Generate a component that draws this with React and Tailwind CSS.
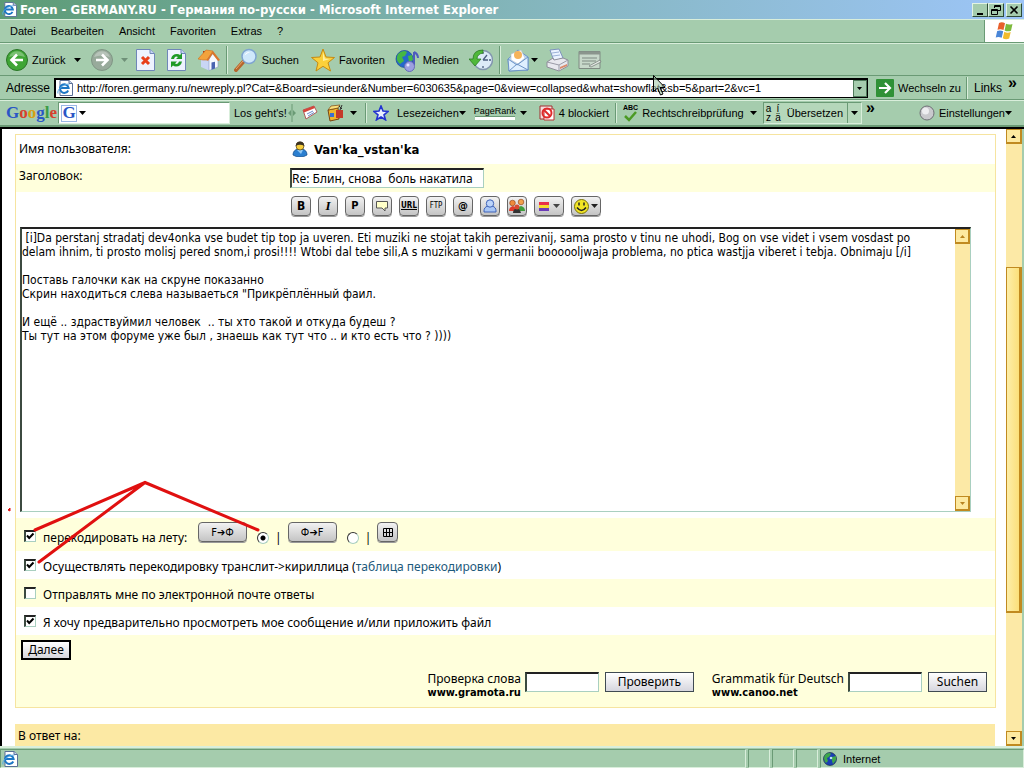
import { useState } from "react";

const draft = ` [i]Da perstanj stradatj dev4onka vse budet tip top ja uveren. Eti muziki ne stojat takih perezivanij, sama prosto v tinu ne uhodi, Bog on vse videt i vsem vosdast po
delam ihnim, ti prosto molisj pered snom,i prosi!!!! Wtobi dal tebe sili,A s muzikami v germanii boooooljwaja problema, no ptica wastjja viberet i tebja. Obnimaju [/i]

Поставь галочки как на скруне показанно
Скрин находиться слева называеться "Прикрёплённый фаил.

И ещё .. здраствуймил человек  .. ты хто такой и откуда будеш ?
Ты тут на этом форуме уже был , знаешь как тут что .. и кто есть что ? ))))`;

const ui = "font-['Liberation_Sans',sans-serif] text-[11px] leading-[14px]";
const narrow = "font-['DejaVu_Sans_Condensed','DejaVu_Sans',sans-serif]";
const body = "font-['Noto_Sans','DejaVu_Sans',sans-serif]";
const fieldCls = "border border-t-2 border-l-2 border-t-[#222] border-l-[#3c4a40] border-r-[#a9cfc0] border-b-[#a9cfc0] bg-white outline-none";
const keyCls = "flex h-5 items-center justify-center rounded-[4px] border border-[#666] bg-linear-to-b from-[#f2f2f2] to-[#c4c4c4] shadow-[0_1px_0_#999]";
const pushCls = "h-5 border border-[#3f4a52] bg-linear-to-b from-white to-[#d6d6de] text-[12px] leading-[14px]";

/* ---------- icons ---------- */

function IePage({ className = "size-4" }) {
  return (
    <svg viewBox="0 0 16 16" className={`${className} shrink-0`}>
      <path d="M3 .5h9l3.500 3v12H3z" fill="#fff" stroke="#5a6f96" />
      <path d="M12 .5v3h3.500" fill="#c9d6ee" stroke="#5a6f96" />
      <path d="M11.200 10.500A4.300 4.300 0 1 1 11.600 8H3.500" fill="none" stroke="#1b76c4" strokeWidth="2" />
      <path d="M1 13.500C-.5 10 6 4 12.500 4" fill="none" stroke="#55a8e6" />
    </svg>
  );
}

function Caret({ className = "text-black" }) {
  return (
    <svg viewBox="0 0 7 4" className={`h-1 w-[7px] shrink-0 ${className}`}>
      <path d="M0 0h7L3.500 4z" fill="currentColor" />
    </svg>
  );
}

function ArrowBall({ color, dark, flip }) {
  return (
    <svg viewBox="0 0 22 22" className="size-[22px] shrink-0">
      <circle cx="11" cy="11" r="10.500" fill={color} stroke={dark} />
      <path d="M3 8a8.500 8.500 0 0 1 16 0q-8-3-16 0z" fill="#fff" opacity=".3" />
      <path d={flip ? "M5 11h11M11 5.500l5.500 5.500-5.500 5.500" : "M17 11H6M11 5.500L5.500 11l5.500 5.500"} fill="none" stroke="#fff" strokeWidth="2.600" />
    </svg>
  );
}

function StopIcon() {
  return (
    <svg viewBox="0 0 19 22" className="h-[22px] w-[19px]">
      <path d="M.5.5H14l4.500 4v17H.5z" fill="#eef3ff" stroke="#6f86b8" />
      <path d="M14 .5v4h4.500" fill="#c4d2f2" stroke="#6f86b8" />
      <path d="M6 8l7 7M13 8l-7 7" stroke="#e8401c" strokeWidth="3" />
    </svg>
  );
}

function RefreshIcon() {
  return (
    <svg viewBox="0 0 19 22" className="h-[22px] w-[19px]">
      <path d="M.5.5H14l4.500 4v17H.5z" fill="#eef3ff" stroke="#6f86b8" />
      <path d="M14 .5v4h4.500" fill="#c4d2f2" stroke="#6f86b8" />
      <path d="M4 10q1-5 6-5 2 0 3 1l2-2v6H9l2-2q-3-1.500-4 2z" fill="#1e9a28" />
      <path d="M15 12.500q-1 5-6 5-2 0-3-1l-2 2v-6h6l-2 2q3 1.500 4-2z" fill="#1e9a28" />
    </svg>
  );
}

function HomeIcon() {
  return (
    <svg viewBox="0 0 22 22" className="size-[22px]">
      <path d="M5 2h3v6H5z" fill="#a33c1c" />
      <path d="M3 10v8l8 3.500V9z" fill="#c9d6f5" />
      <path d="M11 21.500l9-3.500v-8l-5-6-4 6z" fill="#f7f9ff" stroke="#8898c4" strokeWidth=".6" />
      <path d="M0 10L8 1l7 1-6 9-4 0z" fill="#f2a23c" stroke="#cf6f1c" strokeWidth=".6" />
      <path d="M15 2l7 9-2 1-5.500-7L10 12l-1.500-1z" fill="#d9752b" />
      <path d="M13.500 13.500l3.500-.8v6.800l-3.500 1.200z" fill="#4a63b0" />
    </svg>
  );
}

function SearchIcon() {
  return (
    <svg viewBox="0 0 24 24" className="size-6">
      <path d="M2 22l8-9" stroke="#b5652c" strokeWidth="4" strokeLinecap="round" />
      <path d="M2 21l7-8" stroke="#e8a56c" />
      <circle cx="15" cy="8.500" r="7" fill="#cfe8fb" stroke="#7ea4d0" strokeWidth="1.500" />
      <path d="M10.500 7.500Q12 3.500 16 4q-3 1-5.500 3.500z" fill="#fff" />
    </svg>
  );
}

function StarIcon() {
  return (
    <svg viewBox="0 0 24 24" className="size-6">
      <path d="M12 1l3 8 8.500.5-6.500 5.300L19.500 23 12 18.300 5 23l2-8.200L.5 9.500 9 9z" fill="#fbd03a" stroke="#c68a12" />
      <path d="M12 4l2 6.500 5 .5-7 2z" fill="#fff0a0" />
    </svg>
  );
}

function MediaIcon() {
  return (
    <svg viewBox="0 0 24 24" className="size-6">
      <circle cx="9.500" cy="11" r="8.500" fill="#2468cc" stroke="#1a4792" strokeWidth=".7" />
      <path d="M3 6q5-5 9-2l-2 4-3 1 2 4-4 3Q0 12 3 6zM13 8l4-1 1 5-4 2z" fill="#45b746" />
      <path d="M19 4v13M19 4q4 2 4 6" fill="none" stroke="#4f5bbf" strokeWidth="2" />
      <circle cx="14.500" cy="18.500" r="5" fill="#9c9fe0" stroke="#656ab8" />
      <circle cx="13" cy="17" r="1.500" fill="#e3e4ff" />
    </svg>
  );
}

function HistoryIcon() {
  return (
    <svg viewBox="0 0 24 24" className="size-6">
      <circle cx="14" cy="12" r="9.500" fill="#dcebf8" stroke="#8296ae" strokeWidth="1.500" />
      <path d="M14 4v2M14 18v2M20 12h2M14 12l4-5M14 12h5" stroke="#4c5f80" strokeWidth="1.300" />
      <path d="M14 2Q4 2 4 11H0l6 7 6-7H8q0-5 6-6z" fill="#4fb83a" stroke="#2c7d24" strokeWidth=".8" />
    </svg>
  );
}

function MailIcon() {
  return (
    <svg viewBox="0 0 22 24" className="h-6 w-[22px]">
      <path d="M1 11l10-9 10 7v13L2 23z" fill="#b9d7f5" stroke="#6d94c6" />
      <path d="M4 6l10-4 4 8-7 6-7-4z" fill="#fff" stroke="#b4bccb" strokeWidth=".6" />
      <circle cx="11" cy="7" r="4" fill="#f6b35a" />
      <path d="M1 11l9 6 11-8v13L2 23z" fill="#e0f0ff" stroke="#6d94c6" />
      <path d="M2 23l8-7 11 6" fill="none" stroke="#6d94c6" />
    </svg>
  );
}

function PrintIcon() {
  return (
    <svg viewBox="0 0 24 24" className="size-6">
      <path d="M4 2l9-1 4 9-9 3z" fill="#eaf3ff" stroke="#7d93bd" />
      <path d="M6 5l7-1M7 8l7-1" stroke="#9db2d8" />
      <path d="M1 14l6-4 1 2 9-2 5 2v6l-9 5-12-4z" fill="#e8e8ee" stroke="#8d8d99" />
      <path d="M1 14l12 3 9-5M13 17v6" fill="none" stroke="#9a9aa6" />
      <path d="M14 19l7-3v2l-7 3z" fill="#d98a6a" />
    </svg>
  );
}

function EditIcon() {
  return (
    <svg viewBox="0 0 24 20" className="h-5 w-6">
      <path d="M1 1.500h21v17H1z" fill="#c8d8ca" stroke="#7f8a82" />
      <path d="M1 1.500h21v3H1z" fill="#8b958d" />
      <path d="M4 8h15M4 11h14M4 14h8" stroke="#7f8a82" />
      <path d="M11 16l11-6 1 2-10 5z" fill="#e4e9e4" stroke="#6d7570" strokeWidth=".7" />
    </svg>
  );
}

function WindowsFlag() {
  return (
    <svg viewBox="0 0 20 18" className="h-[18px] w-5">
      <path d="M4 1q3-1.500 6 .3L8.500 8Q5.500 6.500 2.500 7.700z" fill="#e8602c" />
      <path d="M11 1.800q3 1.500 6.500.2L16 8.700q-3.500 1.300-6.400-.3z" fill="#7dba3c" />
      <path d="M2.200 9q3-1.300 6 .3l-1.500 6.500q-3-1.600-6-.4z" fill="#4a86d8" />
      <path d="M9.300 9.800q3 1.500 6.400.3l-1.500 6.400q-3.400 1.400-6.400-.2z" fill="#f2bb2c" />
    </svg>
  );
}

function UserIcon() {
  return (
    <svg viewBox="0 0 16 16" className="size-4">
      <path d="M1 14q0-5 5-6h4q5 1 5 6-3 2-7 2t-7-2z" fill="#2b7fd0" stroke="#174f8c" strokeWidth=".8" />
      <path d="M5 9l4 4 2-4z" fill="#8fc8f5" />
      <circle cx="8" cy="5" r="4" fill="#f7cf3d" stroke="#4d3a12" strokeWidth=".7" />
      <path d="M3.700 5Q4 .5 8 .5T12.300 5Q8 2.500 3.700 5z" fill="#3c3324" />
    </svg>
  );
}

function Globe() {
  return (
    <svg viewBox="0 0 14 14" className="size-[14px]">
      <circle cx="7" cy="7" r="6.500" fill="#1a3fb4" stroke="#123" strokeWidth=".6" />
      <path d="M3 2q4-2 5 0L6 5 4 6l1 3-2 2Q-1 6 3 2zM9 5l4-1v4l-3 4-1-3z" fill="#3ea64a" />
      <circle cx="8" cy="6" r="1.300" fill="#b9e4f7" />
    </svg>
  );
}

function Sep({ className = "h-7" }) {
  return <span className={`w-0.5 shrink-0 border-l border-r border-l-[#6a9a75] border-r-[#d9eedb] ${className}`} />;
}

/* ---------- browser chrome ---------- */

function TitleBar() {
  const btn = "flex h-[14px] w-4 items-center justify-center border border-t-[#e2f3e3] border-l-[#e2f3e3] border-r-[#2f4c38] border-b-[#2f4c38] bg-[#a5ccad]";
  return (
    <header className="flex h-[19px] shrink-0 items-center bg-linear-to-r from-[#5c9b75] via-[#83b5ba] to-[#9dc5f8] px-0.5">
      <IePage className="size-[15px]" />
      <h1 className={`${narrow} ml-[3px] flex-1 truncate text-[13px] leading-[15px] font-bold text-white`}>
        Foren - GERMANY.RU - Германия по-русски - Microsoft Internet Explorer
      </h1>
      <button aria-label="Minimieren" className={btn}>
        <svg viewBox="0 0 10 10" className="size-[10px]"><path d="M2 8h6v2H2z" /></svg>
      </button>
      <button aria-label="Wiederherstellen" className={btn}>
        <svg viewBox="0 0 10 10" className="size-[10px]" fill="none" stroke="#000"><path d="M3.500 3V.5h6v5H7M3.500 1.500h6M.5 4.500h6v5h-6zM.5 5.500h6" /></svg>
      </button>
      <button aria-label="Schließen" className={`${btn} ml-0.5`}>
        <svg viewBox="0 0 10 10" className="size-[10px]" stroke="#000" strokeWidth="1.600"><path d="M1.500 1.500l7 7M8.500 1.500l-7 7" /></svg>
      </button>
    </header>
  );
}

function MenuBar() {
  return (
    <nav className="flex h-6 shrink-0 items-stretch border-t border-b border-t-[#d9eedb] border-b-[#6a9a75]">
      <div className="flex flex-1 items-center gap-[15px] pl-2.5">
        {["Datei", "Bearbeiten", "Ansicht", "Favoriten", "Extras", "?"].map((m) => (
          <button key={m}>{m}</button>
        ))}
      </div>
      <div className="flex w-10 items-center justify-center border-l border-[#6a9a75] bg-white">
        <WindowsFlag />
      </div>
    </nav>
  );
}

function ToolBar() {
  return (
    <div className="flex h-[33px] shrink-0 items-center border-t border-b border-t-[#d9eedb] border-b-[#6a9a75] pl-1.5">
      <button className="flex items-center">
        <ArrowBall color="#3fa535" dark="#2a7526" />
        <span className="mx-1">Zurück</span>
      </button>
      <button aria-label="Verlauf zurück" className="ml-1"><Caret /></button>
      <button aria-label="Vorwärts" className="ml-2.5"><ArrowBall color="#98aa9b" dark="#7f9584" flip /></button>
      <button aria-label="Verlauf vorwärts" className="ml-2"><Caret className="text-[#6f9078]" /></button>
      <button aria-label="Abbrechen" className="ml-2"><StopIcon /></button>
      <button aria-label="Aktualisieren" className="ml-3"><RefreshIcon /></button>
      <button aria-label="Startseite" className="ml-3"><HomeIcon /></button>
      <Sep className="mx-1.5 h-7" />
      <button className="flex items-center gap-1"><SearchIcon />Suchen</button>
      <button className="ml-3 flex items-center gap-1"><StarIcon />Favoriten</button>
      <button className="ml-2.5 flex items-center gap-1"><MediaIcon />Medien</button>
      <button aria-label="Verlauf" className="ml-2.5"><HistoryIcon /></button>
      <Sep className="mx-1.5 h-7" />
      <button aria-label="E-Mail" className="flex items-center gap-0.5"><MailIcon /><Caret /></button>
      <button aria-label="Drucken" className="ml-2"><PrintIcon /></button>
      <button aria-label="Bearbeiten" className="ml-2"><EditIcon /></button>
    </div>
  );
}

function AddressBar() {
  return (
    <form className="flex h-6 shrink-0 items-center border-b border-b-[#6a9a75] pl-1.5" onSubmit={(e) => e.preventDefault()}>
      <label htmlFor="url" className="w-12 text-[12px]">Adresse</label>
      <div className="flex h-5 flex-1 items-center border border-t-2 border-l-2 border-black bg-white pl-px">
        <IePage />
        <input id="url" className="ml-1 min-w-0 flex-1 outline-none"
          defaultValue="http://foren.germany.ru/newreply.pl?Cat=&Board=sieunder&Number=6030635&page=0&view=collapsed&what=showflat&sb=5&part=2&vc=1" />
        <button type="button" aria-label="Adressen" className="flex h-full w-[14px] items-center justify-center border border-[#4f7a5a] bg-[#a5ccad]">
          <svg viewBox="0 0 5 3" className="h-[3px] w-[5px]"><path d="M0 0h5L2.500 3z" /></svg>
        </button>
      </div>
      <button className="ml-2 flex items-center gap-1">
        <svg viewBox="0 0 18 18" className="size-[18px]">
          <rect width="18" height="18" rx="1" fill="#2f9136" />
          <path d="M3 9h11M9 4l5 5-5 5" fill="none" stroke="#fff" strokeWidth="2.200" />
        </svg>
        <span className="w-[66px] text-left">Wechseln zu</span>
      </button>
      <Sep className="ml-0.5 h-[22px]" />
      <button type="button" className="mx-1.5 text-[12px]">Links</button>
      <span className="w-4 self-start text-[16px] leading-[14px] font-bold">»</span>
    </form>
  );
}

function GoogleBar() {
  return (
    <div className="flex h-[27px] shrink-0 items-center border-t border-b-2 border-t-[#d9eedb] border-b-[#6a9a75] pl-1.5">
      <div className="w-[52px] font-['Liberation_Serif',serif] text-[17px] leading-5 font-bold">
        <span className="text-[#2a56c6]">G</span><span className="text-[#d8402c]">o</span><span className="text-[#d9a012]">o</span><span className="text-[#2a56c6]">g</span><span className="text-[#3c9c46]">l</span><span className="text-[#d8402c]">e</span>
      </div>
      <div className="flex h-[22px] w-[172px] items-center border border-t-[#6a9a75] border-l-[#6a9a75] border-r-[#d9eedb] border-b-[#d9eedb] bg-white pl-0.5">
        <span className="flex h-[17px] w-4 items-center justify-center border border-[#9ab7e6] font-['Liberation_Serif',serif] text-[17px] font-bold text-[#2a56c6]">G</span>
        <button aria-label="Suchverlauf" className="ml-0.5"><Caret /></button>
        <input aria-label="Google-Suche" className="min-w-0 flex-1 outline-none" />
      </div>
      <button className="ml-1 w-[52px] whitespace-nowrap">Los geht's!</button>
      <svg viewBox="0 0 8 18" className="ml-0.5 h-[18px] w-2"><path d="M4 0v18" stroke="#6a9a75" /><path d="M0 9l3-3v6zM8 9L5 6v6z" fill="#6a9a75" /></svg>
      <svg viewBox="0 0 16 16" className="ml-1.5 size-4">
        <path d="M1 5l11-4 3 6-11 7z" fill="#fff" stroke="#b05a5a" />
        <path d="M1 5l11-4 1 2L2 7.500z" fill="#d4453a" />
        <path d="M5 9l6-3M6 11l6-3.500" stroke="#6a8ac9" />
      </svg>
      <svg viewBox="0 0 18 18" className="ml-2 size-[18px]">
        <path d="M2 6l10-2 1 11-9 2z" fill="#f0b62c" stroke="#7a4310" />
        <path d="M2 6l3-4 9-1-2 3z" fill="#fbe07c" stroke="#7a4310" strokeWidth=".7" />
        <path d="M10 6h7v8h-7z" fill="#c53a2a" />
        <path d="M4 9h4v4H4z" fill="#3c6fd0" /><path d="M13 2l3 3M16 1l-2 5" stroke="#2e2e2e" />
      </svg>
      <button aria-label="Mehr" className="ml-1.5"><Caret /></button>
      <Sep className="mr-1.5 ml-2 h-5" />
      <button className="flex items-center">
        <svg viewBox="0 0 16 16" className="size-4"><path d="M8 1l2 5 5 .5-4 3.300 1.500 5L8 12l-4.500 2.800 1.500-5L1 6.500 6 6z" fill="#eaf0ff" stroke="#2334d0" strokeWidth="1.600" /></svg>
        <span className="ml-2">Lesezeichen</span><Caret />
      </button>
      <button className="ml-2 flex items-center gap-1">
        <span className="flex flex-col text-[9px] leading-[9px]">PageRank<span className="h-1 w-10 self-center border-t border-[#6a9a75] bg-white" /></span>
        <Caret />
      </button>
      <button className="ml-3 flex items-center gap-1">
        <svg viewBox="0 0 16 16" className="size-4">
          <path d="M1 1h12v13H1z" fill="#f5dede" stroke="#a02f2f" /><path d="M5 4h10v11H5z" fill="#fff" stroke="#b33" />
          <circle cx="8" cy="8" r="4.500" fill="none" stroke="#e02a2a" strokeWidth="2" /><path d="M5 5l6 6" stroke="#e02a2a" strokeWidth="2" />
        </svg>
        4 blockiert
      </button>
      <Sep className="ml-1.5 h-5" />
      <button className="ml-1.5 flex items-center gap-1">
        <span className="flex flex-col items-center text-[7px] leading-[7px] font-bold">ABC
          <svg viewBox="0 0 14 11" className="h-[11px] w-[14px]"><path d="M1 5l4 4 7-8" fill="none" stroke="#4b9a24" strokeWidth="2.500" /></svg>
        </span>
        Rechtschreibprüfung<Caret className="ml-0.5" />
      </button>
      <div className="ml-1.5 flex h-[22px] items-center border border-t-[#6a9a75] border-l-[#6a9a75] border-r-[#d9eedb] border-b-[#d9eedb] bg-[#b5d7ba]">
        <button className="flex items-center gap-1.5 pl-0.5">
          <span className="grid grid-cols-2 gap-x-1 text-[10px] leading-[9px]"><span>a</span><span>í</span><span>z</span><span>ä</span></span>
          Übersetzen
        </button>
        <button aria-label="Sprachen" className="ml-1 flex h-full items-center border-l border-[#6a9a75] px-[3px]"><Caret /></button>
      </div>
      <span className="ml-1 self-start text-[16px] font-bold leading-[14px]">»</span>
      <button className="mr-3 ml-auto flex items-center">
        <svg viewBox="0 0 16 16" className="mr-1 size-4"><circle cx="8" cy="8" r="7" fill="#c9c9cd" stroke="#6f6f76" /><circle cx="6.500" cy="6" r="3.500" fill="#ededf0" /></svg>
        Einstellungen<Caret />
      </button>
    </div>
  );
}

function StatusBar() {
  const cell = "border border-t-[#6a9a75] border-l-[#6a9a75] border-r-[#d9eedb] border-b-[#d9eedb]";
  return (
    <footer className="flex h-[22px] shrink-0 gap-0.5 border-t-2 border-[#d9eedb] pt-px">
      <div className={`${cell} flex flex-1 items-center pl-px`}><IePage /></div>
      <div className={`${cell} w-[22px]`} />
      <div className={`${cell} w-[22px]`} />
      <div className={`${cell} w-[22px]`} />
      <div className={`${cell} flex w-[204px] items-center gap-1.5 pl-0.5`}><Globe />Internet</div>
    </footer>
  );
}

/* ---------- scrollbars ---------- */

function ScrollButton({ up, color = "#000" }) {
  return (
    <span className="flex h-[15px] w-full shrink-0 items-center justify-center border border-r-2 border-b-2 border-[#c08a20] bg-[#fde9a0]">
      <svg viewBox="0 0 5 3" className="h-[3px] w-[5px]"><path d={up ? "M0 3h5L2.500 0z" : "M0 0h5L2.500 3z"} fill={color} /></svg>
    </span>
  );
}

function PageScroll() {
  return (
    <div className="flex w-4 shrink-0 flex-col bg-[#fce9a6]">
      <ScrollButton up />
      <span className="basis-[20%]" />
      <span className="basis-[56%] border border-r-[3px] border-b-2 border-[#c08a20] bg-linear-to-r from-[#fdeea8] to-[#fbe07a]" />
      <span className="flex-1" />
      <ScrollButton />
    </div>
  );
}

/* ---------- form ---------- */

const keys = [
  { name: "Bold", face: <b className="text-[12px]">B</b> },
  { name: "Italic", face: <i className="font-['Liberation_Serif',serif] text-[13px] font-bold">I</i> },
  { name: "Paragraph", face: <b className="text-[11px]">P</b> },
  { name: "Quote", face: <svg viewBox="0 0 12 12" className="size-3"><path d="M.5 1.500h11v6.500H9v3L6 8H.5z" fill="#ffffc8" stroke="#555" /></svg> },
  { name: "Link", face: <b className="text-[8px] underline">URL</b> },
  { name: "FTP link", face: <span className="text-[8px]">FTP</span> },
  { name: "E-Mail", face: <b className="text-[11px]">@</b> },
  { name: "User", face: <svg viewBox="0 0 14 14" className="size-[14px]"><path d="M1 13q-.5-5 4-6h4q4.500 1 4 6z" fill="#a8c6f5" stroke="#3f63b8" /><circle cx="7" cy="4.500" r="3.700" fill="#bdd5fa" stroke="#3f63b8" /></svg> },
  { name: "Group", face: (
    <svg viewBox="0 0 18 16" className="h-4 w-[18px]">
      <path d="M1 13q0-4 4-5 3 1 4 5z" fill="#e03a2c" /><circle cx="4.500" cy="5" r="2.800" fill="#ef8a3c" stroke="#8c3a14" strokeWidth=".6" />
      <path d="M9 13q0-4 4-5 4 1 4 5z" fill="#3f9e3c" /><circle cx="13" cy="4" r="2.800" fill="#f2a04c" stroke="#8c3a14" strokeWidth=".6" />
      <path d="M5 15q0-4 4-5 3 1 4 5z" fill="#333" /><circle cx="9" cy="9" r="2.500" fill="#d84a30" />
    </svg>
  ) },
];

function FormatKeys() {
  return (
    <div className={`${narrow} flex h-[35px] items-start gap-[7px] pt-1`}>
      {keys.map((k) => (
        <button key={k.name} type="button" aria-label={k.name} className={`${keyCls} w-5 leading-3`}>{k.face}</button>
      ))}
      <button type="button" aria-label="Farbe" className={`${keyCls} w-[30px] gap-1`}>
        <svg viewBox="0 0 10 9" className="h-[9px] w-[10px]"><path d="M0 0h10v3H0z" fill="#e8304a" /><path d="M0 3h10v3H0z" fill="#f4dc30" /><path d="M0 6h10v3H0z" fill="#6c3cb8" /></svg>
        <Caret className="text-[#444]" />
      </button>
      <button type="button" aria-label="Smileys" className={`${keyCls} w-[30px] gap-0.5`}>
        <svg viewBox="0 0 15 15" className="size-[15px]"><circle cx="7.500" cy="7.500" r="7" fill="#f2e526" stroke="#77700f" /><path d="M5 3.500v3M10 3.500v3M3 8.500q4.500 6 9 0" fill="none" stroke="#222" strokeWidth="1.500" /></svg>
        <Caret className="text-[#222]" />
      </button>
    </div>
  );
}

function Check({ id, on, children }) {
  const [checked, setChecked] = useState(on);
  return (
    <div className="flex items-start gap-[7px]">
      <span className="relative flex size-3 shrink-0">
        <input id={id} type="checkbox" checked={checked} onChange={(e) => setChecked(e.target.checked)}
          className={`${fieldCls} size-3 appearance-none`} />
        {checked && (
          <svg viewBox="0 0 12 12" className="pointer-events-none absolute inset-0 size-3"><path d="M3 5.500l2.200 2.500L9.500 3.500" fill="none" stroke="#000" strokeWidth="2" /></svg>
        )}
      </span>
      <label htmlFor={id}>{children}</label>
    </div>
  );
}

function Radio({ label, on }) {
  return (
    <input type="radio" name="direction" aria-label={label} defaultChecked={on}
      className="size-3 shrink-0 appearance-none rounded-full border border-t-[#333] border-l-[#333] border-r-[#a9cfc0] border-b-[#a9cfc0] bg-white checked:bg-[radial-gradient(circle,#000_2px,#fff_3px)]" />
  );
}

function LookUp({ id, title, site, children }) {
  return (
    <div className="flex items-start">
      <label htmlFor={id} className="mr-1 leading-[14px]">
        {title}
        <b className={`${narrow} block text-[11px]`}>{site}</b>
      </label>
      <input id={id} className={`${fieldCls} h-5 w-[74px]`} />
      {children}
    </div>
  );
}

function ReplyForm() {
  return (
    <form className="border border-[#f6e4a0]" onSubmit={(e) => e.preventDefault()}>
      <div className="flex h-[29px] items-start pl-[3px]">
        <span className="w-[273px] pt-1.5">Имя пользователя:</span>
        <span className="flex items-center gap-1.5 pt-1.5"><UserIcon /><b className={`${narrow} text-[13px]`}>Van'ka_vstan'ka</b></span>
      </div>
      <div className="flex h-7 items-start bg-[#ffffdc] pl-[3px]">
        <label htmlFor="subject" className="w-[271px] pt-1">Заголовок:</label>
        <input id="subject" defaultValue="Re: Блин, снова  боль накатила" className={`${fieldCls} mt-1 h-5 w-[194px]`} />
      </div>
      <div className="pl-[275px]"><FormatKeys /></div>
      <div className={`${fieldCls} ml-1 mr-6 flex h-[285px]`}>
        <textarea aria-label="Текст сообщения" defaultValue={draft}
          className={`${narrow} min-w-0 flex-1 resize-none overflow-hidden pt-0.5 text-[12px] leading-[14px] whitespace-pre outline-none`} />
        <div className="flex w-[15px] flex-col justify-between bg-[#fce9a6]">
          <ScrollButton up color="#b8831f" />
          <ScrollButton color="#b8831f" />
        </div>
      </div>
      <div className="mt-1.5 flex h-[33px] bg-[#ffffdc] pl-2">
        <div className="w-[168px] pt-3 whitespace-nowrap"><Check id="live" on>перекодировать на лету:</Check></div>
        <button type="button" className={`${keyCls} ${narrow} mt-1 ml-1.5 w-[49px] text-[11px]`}>F➔Ф</button>
        <span className="mt-3 ml-2.5 flex items-center self-start"><Radio label="F➔Ф" on /><span className="ml-1.5">|</span></span>
        <button type="button" className={`${keyCls} ${narrow} mt-1 ml-1.5 w-[49px] text-[11px]`}>Ф➔F</button>
        <span className="mt-3 ml-2.5 flex items-center self-start"><Radio label="Ф➔F" /><span className="ml-1.5">|</span></span>
        <button type="button" aria-label="Клавиатура" className={`${keyCls} mt-1 ml-1.5 w-[21px]`}>
          <svg viewBox="0 0 10 9" className="h-[9px] w-[10px]" fill="none" stroke="#000"><path d="M.5.5h9v8h-9zM.5 4.500h9M3.500.5v8M6.500.5v8" /></svg>
        </button>
      </div>
      <div className="h-7 pt-2 pl-2">
        <Check id="translit" on>
          Осуществлять перекодировку транслит-&gt;кириллица (<a href="#table" className="text-[#1d5a7c]">таблица перекодировки</a>)
        </Check>
      </div>
      <div className="h-7 bg-[#ffffdc] pt-2 pl-2"><Check id="mail" on={false}>Отправлять мне по электронной почте ответы</Check></div>
      <div className="h-7 pt-2 pl-2"><Check id="preview" on>Я хочу предварительно просмотреть мое сообщение и/или приложить файл</Check></div>
      <div className="h-[72px] bg-[#ffffdc] pt-[5px] pr-2 pl-[5px]">
        <button className={`${pushCls} block w-[50px] border-2 border-black`}>Далее</button>
        <div className="mt-3 flex justify-end gap-[18px]">
          <LookUp id="gramota" title="Проверка слова" site="www.gramota.ru">
            <button type="button" className={`${pushCls} ml-1.5 w-[89px]`}>Проверить</button>
          </LookUp>
          <LookUp id="canoo" title="Grammatik für Deutsch" site="www.canoo.net">
            <button type="button" className={`${pushCls} ml-1.5 w-[59px]`}>Suchen</button>
          </LookUp>
        </div>
      </div>
    </form>
  );
}

/* red pen strokes and the pointer lie over the window */
function Marks() {
  return (
    <>
      <svg viewBox="0 0 270 90" className="pointer-events-none absolute top-[480px] left-0 h-[90px] w-[270px]">
        <path d="M35 50L145 2.500L258 50M145 2.500L39 82" fill="none" stroke="#e01010" strokeWidth="3" strokeLinecap="round" />
        <path d="M8 30l2-2v3z" fill="#e01010" stroke="#e01010" />
      </svg>
      <svg viewBox="0 0 13 21" className="pointer-events-none absolute top-[75px] left-[653px] h-[21px] w-[13px]">
        <path d="M.5.5v16l4-3.500 3 7 2.500-1-3-6.500h5z" fill="#a5ccad" fillOpacity=".6" stroke="#000" />
      </svg>
    </>
  );
}

export default function App() {
  return (
    <div className={`${ui} relative flex h-screen min-h-[480px] flex-col overflow-hidden bg-[#a5ccad] text-black`}>
      <TitleBar />
      <MenuBar />
      <ToolBar />
      <AddressBar />
      <GoogleBar />
      <div className="flex min-h-0 flex-1 border-t-2 border-l-2 border-black bg-white">
        <main className={`${body} min-w-0 flex-1 overflow-hidden pt-[5px] pr-2.5 pl-[13px] text-[12px] leading-[15px]`}>
          <ReplyForm />
          <h2 className="mt-4 mr-px h-10 bg-[#fce9a4] pt-1 pl-[3px]">В ответ на:</h2>
        </main>
        <PageScroll />
        <span className="w-0.5 bg-[#a5ccad]" />
      </div>
      <StatusBar />
      <Marks />
    </div>
  );
}
